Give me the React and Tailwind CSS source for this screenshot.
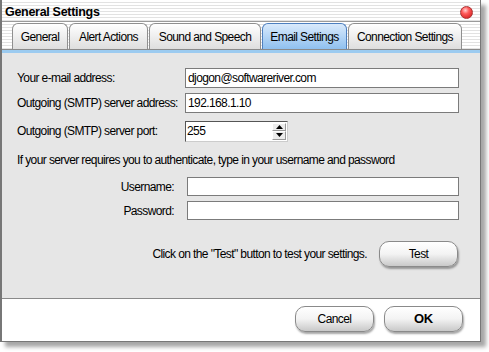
import React from "react";

const font = { fontFamily: '"Liberation Sans", Arial, sans-serif' };

const tabs = [
  { label: "General", w: "w-[56px]" },
  { label: "Alert Actions", w: "w-[79px]" },
  { label: "Sound and Speech", w: "w-[112px]" },
  { label: "Email Settings", w: "w-[85px]", active: true },
  { label: "Connection Settings", w: "w-[114px]" },
];

const stripes =
  "bg-[repeating-linear-gradient(to_bottom,#ffffff_0px,#ffffff_2px,#e2e2e2_2px,#e2e2e2_3px)]";

function GlossyButton({ children, bold }) {
  return (
    <button
      className={`w-[79px] h-[26px] rounded-[10px] border border-[#8a8a8a] bg-linear-to-b from-white via-[#f3f3f3] to-[#c9c9c9] shadow-[1px_2px_2px_rgba(0,0,0,0.35)] text-black ${
        bold ? "font-bold text-[13px] tracking-[-0.2px]" : "text-[12px] tracking-[-0.6px]"
      }`}
    >
      {children}
    </button>
  );
}

export default function App() {
  return (
    <div className="w-[489px] h-[352px] bg-white text-black" style={font}>
      <div className="w-[481px] h-[342px] flex flex-col border-l-2 border-r border-b border-[#777777] shadow-[5px_5px_4px_rgba(0,0,0,0.35)] bg-white">
        {/* title bar */}
        <div className={`h-[22px] flex items-center justify-between pl-[3px] pr-[7px] pt-[3px] border-b border-[#9a9a9a] ${stripes}`}>
          <span className="font-bold text-[12.5px] tracking-[-0.3px]">General Settings</span>
          <span className="w-[13px] h-[13px] rounded-full border border-[#a33] bg-[radial-gradient(circle_at_40%_30%,#ffd0d0_0%,#ff5a5a_35%,#c81010_100%)]" />
        </div>

        {/* tabs */}
        <div className={`h-[28px] flex items-end gap-[1px] pl-[10px] border-b border-[#8a8a8a] text-[12px] tracking-[-0.6px] ${stripes}`}>
          {tabs.map((t) => (
            <div
              key={t.label}
              className={`${t.w} h-[26px] flex items-center justify-center whitespace-nowrap rounded-t-[6px] border border-b-0 ${
                t.active
                  ? "border-[#4d7fbf] bg-linear-to-b from-[#d9eafc] to-[#8fc0ef]"
                  : "border-[#8f8f8f] bg-linear-to-b from-white to-[#dedede]"
              }`}
            >
              {t.label}
            </div>
          ))}
        </div>
        <div className="h-[3px] bg-[#9ccbf0]" />

        {/* content */}
        <div className="flex-1 bg-[#e6e6e6] pl-[15px] pr-[21px] pt-[15px] text-[12px] tracking-[-0.6px] whitespace-nowrap">
          <div className="flex items-center h-[20px]">
            <span className="w-[168px]">Your e-mail address:</span>
            <div className="flex-1 h-[20px] bg-white border border-[#7b7b7b] flex items-center pl-[2px]">djogon@softwareriver.com</div>
          </div>
          <div className="flex items-center h-[20px] mt-[5px]">
            <span className="w-[168px]">Outgoing (SMTP) server address:</span>
            <div className="flex-1 h-[20px] bg-white border border-[#7b7b7b] flex items-center pl-[2px]">192.168.1.10</div>
          </div>
          <div className="flex items-center h-[20px] mt-[8px]">
            <span className="w-[168px]">Outgoing (SMTP) server port:</span>
            <div className="w-[103px] h-[21px] bg-white border border-[#555] border-r-[#ccc] border-b-[#ccc] flex items-center justify-between pl-[1px] pr-[1px]">
              <span>255</span>
              <div className="flex flex-col w-[14px] h-[17px]">
                <div className="flex-1 flex items-center justify-center bg-[#ececec] border border-[#999] border-t-white border-l-white">
                  <svg width="7" height="4" viewBox="0 0 7 4"><path d="M0 4 L3.5 0 L7 4 Z" fill="#000" /></svg>
                </div>
                <div className="flex-1 flex items-center justify-center bg-[#ececec] border border-[#999] border-t-white border-l-white">
                  <svg width="7" height="4" viewBox="0 0 7 4"><path d="M0 0 L3.5 4 L7 0 Z" fill="#000" /></svg>
                </div>
              </div>
            </div>
          </div>
          <div className="mt-[12px] leading-[14px]">
            If your server requires you to authenticate, type in your username and password
          </div>
          <div className="flex items-center h-[19px] mt-[10px]">
            <span className="w-[157px] text-right">Username:</span>
            <div className="ml-[13px] flex-1 h-[19px] bg-white border border-[#7b7b7b]" />
          </div>
          <div className="flex items-center h-[19px] mt-[5px]">
            <span className="w-[157px] text-right">Password:</span>
            <div className="ml-[13px] flex-1 h-[19px] bg-white border border-[#7b7b7b]" />
          </div>
          <div className="flex items-center justify-end gap-[12px] mt-[21px] pr-[1px]">
            <span>Click on the "Test" button to test your settings.</span>
            <GlossyButton>Test</GlossyButton>
          </div>
        </div>

        {/* footer */}
        <div className="h-[43px] border-t border-[#8a8a8a] bg-white flex items-start justify-end gap-[10px] pt-[7px] pr-[17px]">
          <GlossyButton>Cancel</GlossyButton>
          <GlossyButton bold>OK</GlossyButton>
        </div>
      </div>
    </div>
  );
}
